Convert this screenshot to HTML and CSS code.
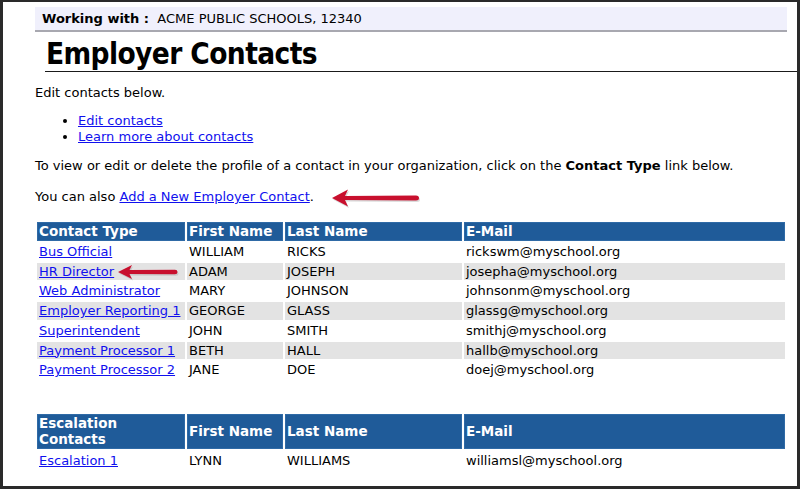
FILE: index.html
```html
<!DOCTYPE html>
<html>
<head>
<meta charset="utf-8">
<link rel="stylesheet" href="styles.css">
</head>
<body>
<div class="frame">
  <div class="working"><b>Working with :</b>&nbsp; ACME PUBLIC SCHOOLS, 12340</div>
  <h1 class="title">Employer Contacts</h1>
  <div class="content">
    <p class="intro">Edit contacts below.</p>
    <ul class="links">
      <li><a href="#">Edit contacts</a></li>
      <li><a href="#">Learn more about contacts</a></li>
    </ul>
    <p class="para">To view or edit or delete the profile of a contact in your organization, click on the <b>Contact Type</b> link below.</p>
    <p class="para also">You can also <a href="#">Add a New Employer Contact</a>.</p>
    <table class="grid">
      <colgroup><col class="c1"><col class="c2"><col class="c3"><col class="c4"></colgroup>
      <tr><th>Contact Type</th><th>First Name</th><th>Last Name</th><th>E-Mail</th></tr>
      <tr><td><a href="#">Bus Official</a></td><td>WILLIAM</td><td>RICKS</td><td>rickswm@myschool.org</td></tr>
      <tr class="alt"><td><a href="#">HR Director</a></td><td>ADAM</td><td>JOSEPH</td><td>josepha@myschool.org</td></tr>
      <tr><td><a href="#">Web Administrator</a></td><td>MARY</td><td>JOHNSON</td><td>johnsonm@myschool.org</td></tr>
      <tr class="alt"><td><a href="#">Employer Reporting 1</a></td><td>GEORGE</td><td>GLASS</td><td>glassg@myschool.org</td></tr>
      <tr><td><a href="#">Superintendent</a></td><td>JOHN</td><td>SMITH</td><td>smithj@myschool.org</td></tr>
      <tr class="alt"><td><a href="#">Payment Processor 1</a></td><td>BETH</td><td>HALL</td><td>hallb@myschool.org</td></tr>
      <tr><td><a href="#">Payment Processor 2</a></td><td>JANE</td><td>DOE</td><td>doej@myschool.org</td></tr>
    </table>
    <table class="grid esc">
      <colgroup><col class="c1"><col class="c2"><col class="c3"><col class="c4"></colgroup>
      <tr><th>Escalation<br>Contacts</th><th>First Name</th><th>Last Name</th><th>E-Mail</th></tr>
      <tr><td><a href="#">Escalation 1</a></td><td>LYNN</td><td>WILLIAMS</td><td>williamsl@myschool.org</td></tr>
    </table>
  </div>
  <svg class="arrow arrow-add" width="92" height="22" viewBox="0 0 92 22">
    <path d="M3 11 L19 2.5 L16 9 L87 8.5 Q90 8.5 90 11 Q90 13.5 87 13.5 L16 13 L19 19.5 Z" fill="#999" opacity="0.35" transform="translate(1 1.5)"/>
    <path d="M3 11 L19 2.5 L16 9 L87 8.5 Q90 8.5 90 11 Q90 13.5 87 13.5 L16 13 L19 19.5 Z" fill="#c8102e"/>
  </svg>
  <svg class="arrow arrow-hr" width="64" height="18" viewBox="0 0 64 18">
    <path d="M2 9 L16 2 L13.5 7 L59 6.8 Q61.5 6.8 61.5 9 Q61.5 11.2 59 11.2 L13.5 11 L16 16 Z" fill="#999" opacity="0.35" transform="translate(1 1.5)"/>
    <path d="M2 9 L16 2 L13.5 7 L59 6.8 Q61.5 6.8 61.5 9 Q61.5 11.2 59 11.2 L13.5 11 L16 16 Z" fill="#c8102e"/>
  </svg>
</div>
</body>
</html>
```
FILE: styles.css
```css
html, body {
  margin: 0;
  padding: 0;
  background: #fff;
}
.frame {
  position: relative;
  width: 800px;
  height: 489px;
  box-sizing: border-box;
  border: 2px solid #2a2a2a;
  border-left-width: 3px;
  border-right-width: 3px;
  border-bottom-width: 3px;
  font-family: "DejaVu Sans", Verdana, sans-serif;
  font-size: 13px;
  color: #000;
  overflow: hidden;
}
.working {
  margin: 5px 0 0 32px;
  padding: 0 0 0 7px;
  background: #f0f0fc;
  border-bottom: 2px solid #a8a8b0;
  line-height: 23px;
  font-size: 13px;
  box-sizing: border-box;
  width: 752px;
  height: 25px;
}
.title {
  margin: 7px -3px 0 42px;
  padding: 0 0 1px 1px;
  font-family: "DejaVu Sans Condensed", "DejaVu Sans", sans-serif;
  font-stretch: condensed;
  font-size: 29.5px;
  line-height: 31px;
  font-weight: bold;
  letter-spacing: -0.6px;
  border-bottom: 1px solid #1a1a1a;
}
.content {
  padding: 0 0 0 32px;
}
.intro {
  margin: 13px 0 0 0;
  line-height: 16px;
}
.links {
  margin: 12px 0 0 0;
  padding-left: 43px;
  line-height: 16px;
}
a {
  color: #1010ee;
  text-decoration: underline;
}
.para {
  margin: 13px 0 0 0;
  line-height: 16px;
}
.also {
  margin-top: 15px;
}
.grid {
  border-collapse: separate;
  border-spacing: 2px;
  margin: 15px 0 0 0;
  width: 752px;
  table-layout: fixed;
}
.c1 { width: 148px; }
.c2 { width: 96px; }
.c3 { width: 177px; }
.c4 { width: 321px; }
.grid th {
  background: #1f5b99;
  color: #fff;
  text-align: left;
  font-size: 13.5px;
  font-weight: bold;
  padding: 0 2px;
  line-height: 19px;
  box-shadow: inset 0 0 0 1px #2f6aa6;
}
.grid td {
  padding: 0 2px;
  line-height: 17.7px;
  white-space: nowrap;
}
.grid tr.alt td {
  background: #e3e3e3;
}
.esc {
  margin-top: 31px;
}
.esc th {
  line-height: 16px;
  padding-top: 1.5px;
  padding-bottom: 1.5px;
}
.esc td {
  line-height: 20px;
}
.arrow {
  position: absolute;
}
.arrow-add {
  left: 326px;
  top: 185px;
}
.arrow-hr {
  left: 113px;
  top: 261px;
}
```
